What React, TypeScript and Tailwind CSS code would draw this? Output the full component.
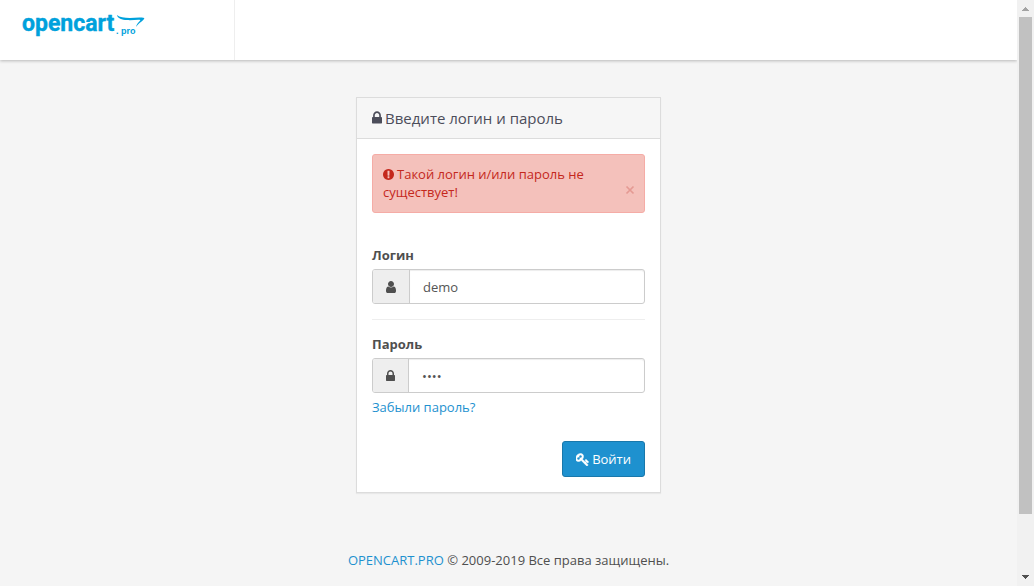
import type { ReactNode } from "react";

function Glyph({ box, className, d }: { box: string; className: string; d: string }) {
  return (
    <svg viewBox={box} className={className} fill="currentColor" aria-hidden="true">
      <path d={d} />
    </svg>
  );
}

const LOCK =
  "M640 768h512v-192q0-106-75-181t-181-75-181 75-75 181v192zm832 96v576q0 40-28 68t-68 28h-960q-40 0-68-28t-28-68v-576q0-40 28-68t68-28h32v-192q0-184 132-316t316-132 316 132 132 316v192h32q40 0 68 28t28 68z";
const USER =
  "M1536 1399q0 109-62.5 187t-150.5 78h-854q-88 0-150.5-78t-62.5-187q0-85 8.5-160.5t31.5-152 58.5-131 94-89 134.5-34.5q131 128 313 128t313-128q76 0 134.5 34.5t94 89 58.5 131 31.5 152 8.5 160.5zm-256-887q0 159-112.5 271.5t-271.5 112.5-271.5-112.5-112.5-271.5 112.5-271.5 271.5-112.5 271.5 112.5 112.5 271.5z";
const ALERT =
  "M896 128q209 0 385.5 103t279.5 279.5 103 385.5-103 385.5-279.5 279.5-385.5 103-385.5-103-279.5-279.5-103-385.5 103-385.5 279.5-279.5 385.5-103zm128 1247v-190q0-14-9-23.5t-22-9.5h-192q-13 0-23 10t-10 23v190q0 13 10 23t23 10h192q13 0 22-9.5t9-23.5zm-2-344l18-621q0-12-10-18-10-8-24-8h-220q-14 0-24 8-10 6-10 18l17 621q0 10 10 17.5t24 7.5h185q14 0 23.5-7.5t10.5-17.5z";
const KEY =
  "M832 512q0-80-56-136t-136-56-136 56-56 136q0 42 19 83-41-19-83-19-80 0-136 56t-56 136 56 136 136 56 136-56 56-136q0-42-19-83 41 19 83 19 80 0 136-56t56-136zm851 704q0 17-49 66t-66 49q-9 0-28.5-16t-36.5-33-38.5-40-24.5-26l-96 96 220 220q28 28 28 68 0 42-39 81t-81 39q-40 0-68-28l-671-671q-176 131-365 131-163 0-265.5-102.5t-102.5-265.5q0-160 95-313t248-248 313-95q163 0 265.5 102.5t102.5 265.5q0 189-131 365l355 355 96-96q-3-3-26-24.5t-40-38.5-33-36.5-16-28.5q0-17 49-66t66-49q13 0 23 10 6 6 46 44.5t82 79.5 86.5 86 73 78 28.5 41z";

function Logo() {
  return (
    <svg viewBox="0 0 124 28" className="h-[28px] w-[124px] overflow-visible" fill="#00a1dc" role="img" aria-label="opencart.pro">
      <text x="0" y="18" fontFamily="Roboto, sans-serif" fontWeight="700" fontSize="23" stroke="#00a1dc" strokeWidth="0.4" strokeLinejoin="round">
        opencart
      </text>
      <text x="94" y="21" fontFamily="'Liberation Sans', sans-serif" fontWeight="700" fontSize="9">
        . pro
      </text>
      <path d="M95 2C97.500 4.300 102 5 108 5C113 4.800 118 4 122.300 5C122.300 7.500 117 9.500 114 14C114.300 10.800 117.300 8.600 118.500 6.900C114 6.500 110 7.600 105 7.100C100 6.800 95.500 5.500 95 2Z" />
    </svg>
  );
}

function Field({ id, label, type, value, icon }: { id: string; label: string; type: string; value: string; icon: ReactNode }) {
  return (
    <div>
      <label htmlFor={id} className="mb-[5px] block font-bold">
        {label}
      </label>
      <div className="flex h-[35px] rounded-[3px] border border-[#ccc] bg-white">
        <span className="flex shrink-0 items-center rounded-l-[2px] border-r border-[#ccc] bg-[#eee] px-[13px]">{icon}</span>
        <input id={id} type={type} defaultValue={value} className="min-w-0 flex-1 rounded-r-[3px] px-[13px] text-[#555] shadow-[inset_0_1px_1px_rgba(0,0,0,0.075)] outline-none" />
      </div>
    </div>
  );
}

function Scrollbar() {
  return (
    <div className="flex w-[17px] shrink-0 flex-col items-center bg-[#f1f1f1]" aria-hidden="true">
      <svg viewBox="0 0 17 17" className="size-[17px]" fill="#a3a3a3" shapeRendering="crispEdges">
        <path d="M5 11h7v-1h-1v-1h-1v-1h-1v-1h-1v1h-1v1h-1v1h-1z" />
      </svg>
      <div className="w-[13px] grow-[497] bg-[#c1c1c1]" />
      <div className="grow-[55]" />
      <svg viewBox="0 0 17 17" className="size-[17px]" fill="#505050" shapeRendering="crispEdges">
        <path d="M5 6h7v1h-1v1h-1v1h-1v1h-1v-1h-1v-1h-1v-1h-1z" />
      </svg>
    </div>
  );
}

export default function App() {
  return (
    <div className="flex min-h-screen bg-[#f5f5f5] font-['Open_Sans',sans-serif] text-[13px] leading-[18px] text-[#4c4d5a]">
      <div className="min-w-0 flex-1">
        <header className="flex h-[60px] bg-white shadow-[0_1px_3px_rgba(0,0,0,0.25)]">
          <a href="#home" className="w-[235px] border-r border-[#eee] pt-[13px] pl-[22px]">
            <Logo />
          </a>
        </header>

        <main className="mx-auto mt-[37px] max-w-[305px] border border-[#dcdcdc] bg-white shadow-[0_1px_1px_rgba(0,0,0,0.05)]">
          <h1 className="flex h-[41px] items-center gap-[3px] border-b border-[#dcdcdc] bg-[#f6f6f6] px-[15px] text-[15px]">
            <Glyph box="320 0 1152 1792" className="h-[16px] w-[10px]" d={LOCK} />
            Введите логин и пароль
          </h1>

          <div className="p-[15px] text-[#4f4f4f]">
            <div role="alert" className="mb-[33px] flex items-center gap-2 rounded-[3px] border border-[#f5aca6] bg-[#f4c1bb] pt-[10px] pr-[9px] pb-[11px] pl-[10px] text-[#c4281c]">
              <p className="flex-1">
                <Glyph box="128 0 1536 1792" className="mr-[3px] inline-block h-[13px] w-[11px] align-[-2px]" d={ALERT} />
                Такой логин и/или пароль не существует!
              </p>
              <button type="button" aria-label="Закрыть" className="mt-[14px] text-[#e49a93]">
                <svg viewBox="0 0 10 10" className="size-[10px]" fill="none" stroke="currentColor" strokeWidth="1.700" aria-hidden="true">
                  <path d="M1.500 1.500l7 7M8.500 1.500l-7 7" />
                </svg>
              </button>
            </div>

            <form onSubmit={(e) => e.preventDefault()}>
              <Field id="username" label="Логин" type="text" value="demo" icon={<Glyph box="256 0 1280 1792" className="h-[14px] w-[10px]" d={USER} />} />
              <hr className="my-[15px] border-[#eee]" />
              <Field id="password" label="Пароль" type="password" value="demo" icon={<Glyph box="320 0 1152 1792" className="h-[14px] w-[9px]" d={LOCK} />} />
              <a href="#forgotten" className="mt-[5px] block text-[#1e91cf]">
                Забыли пароль?
              </a>
              <div className="mt-[25px] flex justify-end">
                <button type="submit" className="flex h-[36px] items-center gap-[3px] rounded-[3px] border border-[#1978ab] bg-[#1e91cf] px-[13px] text-white">
                  <Glyph box="64 64 1664 1664" className="size-[13px] stroke-current stroke-[70]" d={KEY} />
                  Войти
                </button>
              </div>
            </form>
          </div>
        </main>

        <footer className="mt-[58px] pb-[16px] text-center text-[#4f4f4f]">
          <a href="#site" className="text-[#1e91cf]">
            OPENCART.PRO
          </a>{" "}
          © 2009-2019 Все права защищены.
        </footer>
      </div>
      <Scrollbar />
    </div>
  );
}
